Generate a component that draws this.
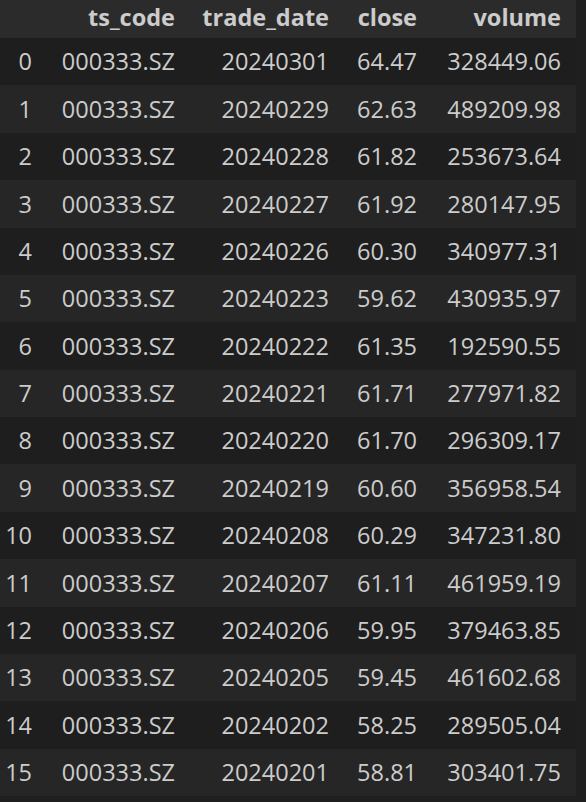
import React from 'react';

// 行情数据
const rows: [string, string, string, string][] = [
  ['000333.SZ', '20240301', '64.47', '328449.06'],
  ['000333.SZ', '20240229', '62.63', '489209.98'],
  ['000333.SZ', '20240228', '61.82', '253673.64'],
  ['000333.SZ', '20240227', '61.92', '280147.95'],
  ['000333.SZ', '20240226', '60.30', '340977.31'],
  ['000333.SZ', '20240223', '59.62', '430935.97'],
  ['000333.SZ', '20240222', '61.35', '192590.55'],
  ['000333.SZ', '20240221', '61.71', '277971.82'],
  ['000333.SZ', '20240220', '61.70', '296309.17'],
  ['000333.SZ', '20240219', '60.60', '356958.54'],
  ['000333.SZ', '20240208', '60.29', '347231.80'],
  ['000333.SZ', '20240207', '61.11', '461959.19'],
  ['000333.SZ', '20240206', '59.95', '379463.85'],
  ['000333.SZ', '20240205', '59.45', '461602.68'],
  ['000333.SZ', '20240202', '58.25', '289505.04'],
  ['000333.SZ', '20240201', '58.81', '303401.75'],
];

const cols = 'grid grid-cols-[47px_143px_154px_88px_144px]';

export default function App() {
  return (
    <div className="min-h-[802px] w-[586px] bg-[#1f1f1f] text-[#cccccc] font-['Open_Sans',sans-serif] text-[23.5px]">
      <div className="w-[576px]">
        {/* 表头 */}
        <div className={`${cols} h-[38px] items-center pb-[3px] bg-[#2b2b2b] font-bold`}>
          <div />
          {['ts_code', 'trade_date', 'close', 'volume'].map((h) => (
            <div key={h} className="text-right pr-[15px] leading-none">
              {h}
            </div>
          ))}
        </div>

        {rows.map((r, i) => (
          <div
            key={i}
            className={`${cols} h-[47.375px] items-center pt-[1px] ${i % 2 === 0 ? 'bg-[#1e1e1e]' : 'bg-[#262626]'}`}
          >
            <div className="text-right pr-[15px] leading-none">{i}</div>
            {r.map((c, j) => (
              <div key={j} className="text-right pr-[15px] leading-none">
                {c}
              </div>
            ))}
          </div>
        ))}
      </div>
    </div>
  );
}
